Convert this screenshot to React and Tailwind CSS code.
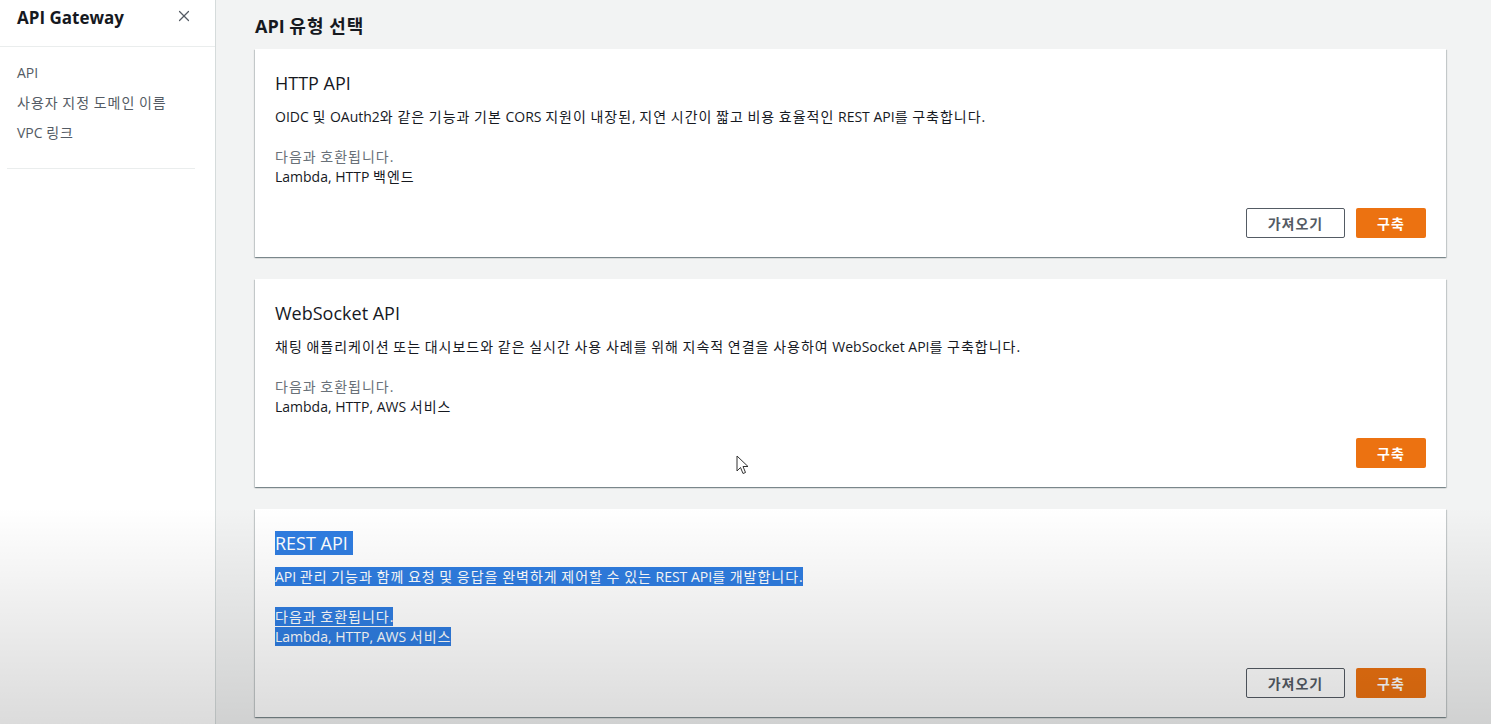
import { X } from 'lucide-react'

const font = { fontFamily: '"Open Sans", "Noto Sans CJK KR", sans-serif' }

// Hangul in the original is a bit wider than Noto's, so loosen those runs only
function Ko({ children }) {
  return String(children)
    .split(/([\uAC00-\uD7A3]+)/)
    .map((part, i) =>
      /[\uAC00-\uD7A3]/.test(part) ? (
        <span key={i} className="tracking-[1px]">{part}</span>
      ) : (
        part
      )
    )
}

function Card({ title, desc, compat, showImport, selected }) {
  const hl = selected ? 'bg-[#2f7de1] text-white' : ''
  return (
    <div className="bg-white shadow-[0_1px_1px_0_rgba(0,28,36,0.3),1px_1px_1px_0_rgba(0,28,36,0.15),-1px_1px_1px_0_rgba(0,28,36,0.15)] px-5 pt-[22px] pb-[19px]">
      <h2 className="text-[18px] leading-6 text-[#16191f]">
        <span className={hl}>{title}{selected ? '\u00a0' : ''}</span>
      </h2>
      <p className="mt-3 text-[14px] leading-5 text-[#16191f]">
        <span className={hl}><Ko>{desc}</Ko></span>
      </p>
      <div className="mt-5 text-[14px] leading-5">
        <div className={selected ? '' : 'text-[#687078]'}>
          <span className={hl}><Ko>다음과 호환됩니다.</Ko></span>
        </div>
        <div className="text-[#16191f]">
          <span className={hl}><Ko>{compat}</Ko></span>
        </div>
      </div>
      <div className="mt-[21px] flex justify-end gap-[11px]">
        {showImport && (
          <button className="h-[30px] w-[99px] rounded-[2px] border border-[#545b64] bg-white text-[14px] font-semibold tracking-[1px] text-[#545b64]">
            가져오기
          </button>
        )}
        <button className="h-[30px] w-[70px] rounded-[2px] bg-[#ec7211] text-[14px] font-semibold tracking-[1px] text-white">
          구축
        </button>
      </div>
    </div>
  )
}

export default function App() {
  return (
    <div style={font} className="relative flex h-[724px] w-[1491px] overflow-hidden bg-[#f2f3f3]">
      <aside className="w-[216px] shrink-0 border-r border-[#d5dbdb] bg-white">
        <div className="flex h-[47px] items-start justify-between border-b border-[#eaeded] pl-[17px] pr-[22px] pt-[6px]">
          <span className="text-[17px] font-bold leading-6 text-[#16191f]">API Gateway</span>
          <X size={18} strokeWidth={1.6} className="mt-[1px] text-[#545b64]" />
        </div>
        <nav className="flex flex-col gap-[10px] px-[17px] pt-[16px] text-[14px] leading-5 text-[#545b64]">
          <a>API</a>
          <a><Ko>사용자 지정 도메인 이름</Ko></a>
          <a><Ko>VPC 링크</Ko></a>
        </nav>
        <div className="mx-[7px] mt-[25px] w-[188px] border-t border-[#eaeded]" />
      </aside>

      <main className="flex-1 pl-[39px] pr-[45px]">
        <h1 className="pt-[14px] text-[18px] font-bold leading-6 text-[#16191f]">
          <Ko>API 유형 선택</Ko>
        </h1>
        <div className="mt-[11px] flex flex-col gap-[22px]">
          <Card
            title="HTTP API"
            desc="OIDC 및 OAuth2와 같은 기능과 기본 CORS 지원이 내장된, 지연 시간이 짧고 비용 효율적인 REST API를 구축합니다."
            compat="Lambda, HTTP 백엔드"
            showImport
          />
          <Card
            title="WebSocket API"
            desc="채팅 애플리케이션 또는 대시보드와 같은 실시간 사용 사례를 위해 지속적 연결을 사용하여 WebSocket API를 구축합니다."
            compat="Lambda, HTTP, AWS 서비스"
          />
          <Card
            title="REST API"
            desc="API 관리 기능과 함께 요청 및 응답을 완벽하게 제어할 수 있는 REST API를 개발합니다."
            compat="Lambda, HTTP, AWS 서비스"
            showImport
            selected
          />
        </div>
      </main>

      {/* mouse cursor */}
      <svg className="pointer-events-none absolute left-[736px] top-[455px]" width="14" height="20" viewBox="0 0 14 20">
        <path d="M1 1 L1 16 L4.5 12.5 L7 18.5 L9.5 17.5 L7 11.5 L12 11.5 Z" fill="white" stroke="#333" strokeWidth="1" strokeLinejoin="round" />
      </svg>

      {/* video vignette at the bottom */}
      <div className="pointer-events-none absolute inset-0 bg-linear-to-b from-transparent via-transparent via-70% to-black/[0.14]" />
    </div>
  )
}
